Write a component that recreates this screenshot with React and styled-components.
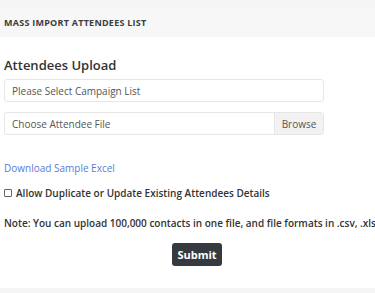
import React from "react";
import styled, { createGlobalStyle } from "styled-components";

const Global = createGlobalStyle`
  html, body { margin: 0; padding: 0; background: #fff; }
  body { font-family: "Open Sans", "Noto Sans", sans-serif; overflow: hidden; }
  * { box-sizing: border-box; }
`;

const Page = styled.div`
  width: 375px;
  height: 293px;
  background: #f5f5f5;
  padding-top: 7px;
  overflow: hidden;
`;

const Card = styled.div`
  background: #fff;
  height: 281px;
  display: flex;
  flex-direction: column;
`;

const CardHeader = styled.div`
  background: #f7f7f7;
  height: 30px;
  display: flex;
  align-items: center;
  padding-left: 4px;
  font-size: 9px;
  font-weight: 700;
  letter-spacing: 0.25px;
  color: #3d3d3d;
  text-transform: uppercase;
`;

const Body = styled.div`
  padding: 19px 4px 0 4px;
  display: flex;
  flex-direction: column;
`;

const Title = styled.h2`
  margin: 0 0 5px 0;
  font-size: 13px;
  font-weight: 600;
  color: #333;
  line-height: 18px;
`;

const Field = styled.div`
  width: 320px;
  height: 23px;
  border: 1px solid #e6e6e6;
  border-radius: 3px;
  display: flex;
  align-items: center;
  background: #fff;
  margin-bottom: ${(p) => p.$mb || 0}px;
  overflow: hidden;
`;

const FieldText = styled.span`
  flex: 1;
  padding-left: 7px;
  font-size: 10px;
  color: #555;
`;

const Browse = styled.span`
  height: 100%;
  width: 49px;
  background: #f2f2f2;
  border-left: 1px solid #e6e6e6;
  display: flex;
  align-items: center;
  justify-content: center;
  font-size: 10px;
  color: #555;
`;

const Link = styled.a`
  margin-top: 26px;
  font-size: 10px;
  color: #5a7bd5;
  text-decoration: none;
  line-height: 14px;
`;

const CheckRow = styled.label`
  margin-top: 11px;
  display: flex;
  align-items: center;
  gap: 4px;
  font-size: 10px;
  font-weight: 600;
  color: #333;
  line-height: 14px;
`;

const Box = styled.span`
  width: 8px;
  height: 8px;
  border: 1px solid #666;
  border-radius: 1px;
  display: inline-block;
`;

const Note = styled.p`
  margin: 16px 0 0 0;
  font-size: 10px;
  font-weight: 600;
  color: #333;
  white-space: nowrap;
  line-height: 14px;
`;

const Actions = styled.div`
  display: flex;
  justify-content: center;
  margin-top: 13px;
  padding-left: 19px;
`;

const Submit = styled.button`
  background: #343a40;
  color: #fff;
  border: none;
  border-radius: 3px;
  width: 50px;
  height: 23px;
  font-family: inherit;
  font-size: 11px;
  font-weight: 700;
  padding: 0;
`;

export default function App() {
  return (
    <>
      <Global />
      <Page>
        <Card>
          <CardHeader>Mass Import Attendees List</CardHeader>
          <Body>
            <Title>Attendees Upload</Title>
            <Field $mb={10}>
              <FieldText>Please Select Campaign List</FieldText>
            </Field>
            <Field>
              <FieldText>Choose Attendee File</FieldText>
              <Browse>Browse</Browse>
            </Field>
            <Link href="#">Download Sample Excel</Link>
            <CheckRow>
              <Box />
              Allow Duplicate or Update Existing Attendees Details
            </CheckRow>
            <Note>Note: You can upload 100,000 contacts in one file, and file formats in .csv, .xls</Note>
            <Actions>
              <Submit>Submit</Submit>
            </Actions>
          </Body>
        </Card>
      </Page>
    </>
  );
}
